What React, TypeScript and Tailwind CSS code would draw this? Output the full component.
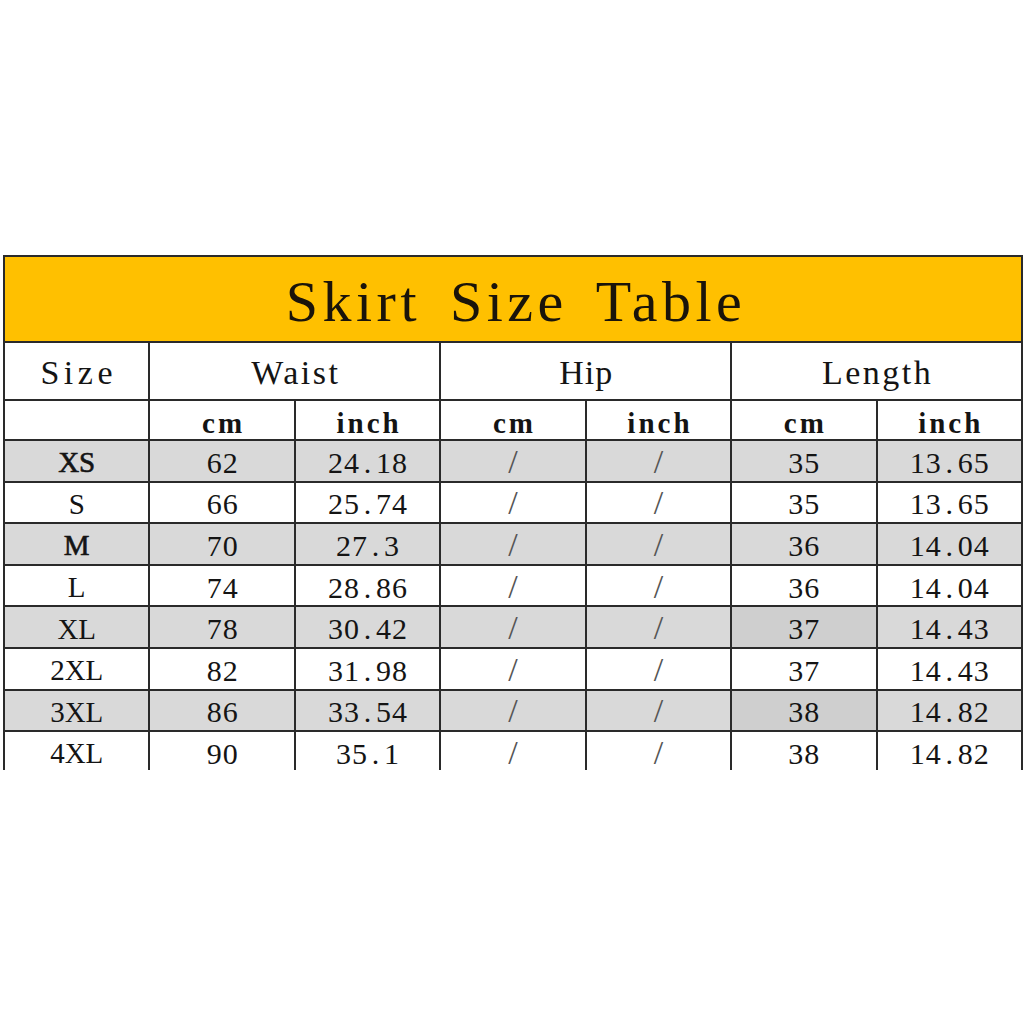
import React from "react";

type Row = { size: string; bold?: boolean; wcm: string; win: string; lcm: string; lin: string };

const rows: Row[] = [
  { size: "XS", bold: true, wcm: "62", win: "24.18", lcm: "35", lin: "13.65" },
  { size: "S", wcm: "66", win: "25.74", lcm: "35", lin: "13.65" },
  { size: "M", bold: true, wcm: "70", win: "27.3", lcm: "36", lin: "14.04" },
  { size: "L", wcm: "74", win: "28.86", lcm: "36", lin: "14.04" },
  { size: "XL", wcm: "78", win: "30.42", lcm: "37", lin: "14.43" },
  { size: "2XL", wcm: "82", win: "31.98", lcm: "37", lin: "14.43" },
  { size: "3XL", wcm: "86", win: "33.54", lcm: "38", lin: "14.82" },
  { size: "4XL", wcm: "90", win: "35.1", lcm: "38", lin: "14.82" },
];

function Spaced({ text, cell }: { text: string; cell: string }) {
  return (
    <span className="inline-flex">
      {text.split("").map((c, i) => (
        <span key={i} className={`inline-block text-center ${cell}`}>
          {c}
        </span>
      ))}
    </span>
  );
}

export default function App() {
  return (
    <div className="w-[1024px] h-[1024px] bg-white overflow-hidden font-['Liberation_Serif',serif] text-[#141414]">
      <div className="ml-[3px] mt-[255px] w-[1020px] h-[515px] overflow-hidden bg-[#2a2a2a] p-[2px] grid grid-cols-7 gap-[2px] grid-rows-[84px_56px_38px_repeat(8,39.6px)]">
        <div className="col-span-7 bg-[#FFC000] flex items-center justify-center pt-[6px] pl-[6px] text-[58px] leading-none tracking-[4.5px] [word-spacing:10px] text-[#1a140a]">
          Skirt Size Table
        </div>

        <div className="bg-white flex items-center justify-center pt-[4px] pl-[4px] text-[34px] leading-none tracking-[4.5px]">
          Size
        </div>
        <div className="col-span-2 bg-white flex items-center justify-center pt-[4px] pl-[2px] text-[34px] leading-none tracking-[2.5px]">
          Waist
        </div>
        <div className="col-span-2 bg-white flex items-center justify-center pt-[4px] pl-[1px] text-[34px] leading-none tracking-[1px]">
          Hip
        </div>
        <div className="col-span-2 bg-white flex items-center justify-center pt-[4px] pl-[2px] text-[34px] leading-none tracking-[2.5px]">
          Length
        </div>

        <div className="bg-white" />
        {["cm", "inch", "cm", "inch", "cm", "inch"].map((t, i) => (
          <div key={i} className="bg-white flex items-center justify-center pt-[6px] pl-[3px] text-[29px] leading-none font-bold tracking-[3px]">
            {t}
          </div>
        ))}

        {rows.map((r, i) => {
          const gray = i % 2 === 0;
          const bg = gray ? "bg-[#D9D9D9]" : "bg-white";
          const dark = i === 4 || i === 6;
          return (
            <React.Fragment key={r.size}>
              <div className={`${bg} flex items-center justify-center pt-[4px] text-[29px] leading-none ${r.bold ? "[-webkit-text-stroke:0.6px_#141414]" : ""}`}>
                {r.size}
              </div>
              <div className={`${bg} flex items-center justify-center pt-[4px] text-[30px] leading-none`}>
                <Spaced text={r.wcm} cell="w-[16px]" />
              </div>
              <div className={`${bg} flex items-center justify-center pt-[4px] text-[30px] leading-none`}>
                <Spaced text={r.win} cell="w-[16px]" />
              </div>
              <div className={`${bg} flex items-center justify-center pt-[2px] text-[34px] leading-none text-[#555]`}>
                /
              </div>
              <div className={`${bg} flex items-center justify-center pt-[2px] text-[34px] leading-none text-[#555]`}>
                /
              </div>
              <div className={`${dark ? "bg-[#CFCFCF]" : bg} flex items-center justify-center pt-[4px] text-[30px] leading-none`}>
                <Spaced text={r.lcm} cell="w-[16px]" />
              </div>
              <div className={`${bg} flex items-center justify-center pt-[4px] text-[30px] leading-none`}>
                <Spaced text={r.lin} cell="w-[16px]" />
              </div>
            </React.Fragment>
          );
        })}
      </div>
    </div>
  );
}
